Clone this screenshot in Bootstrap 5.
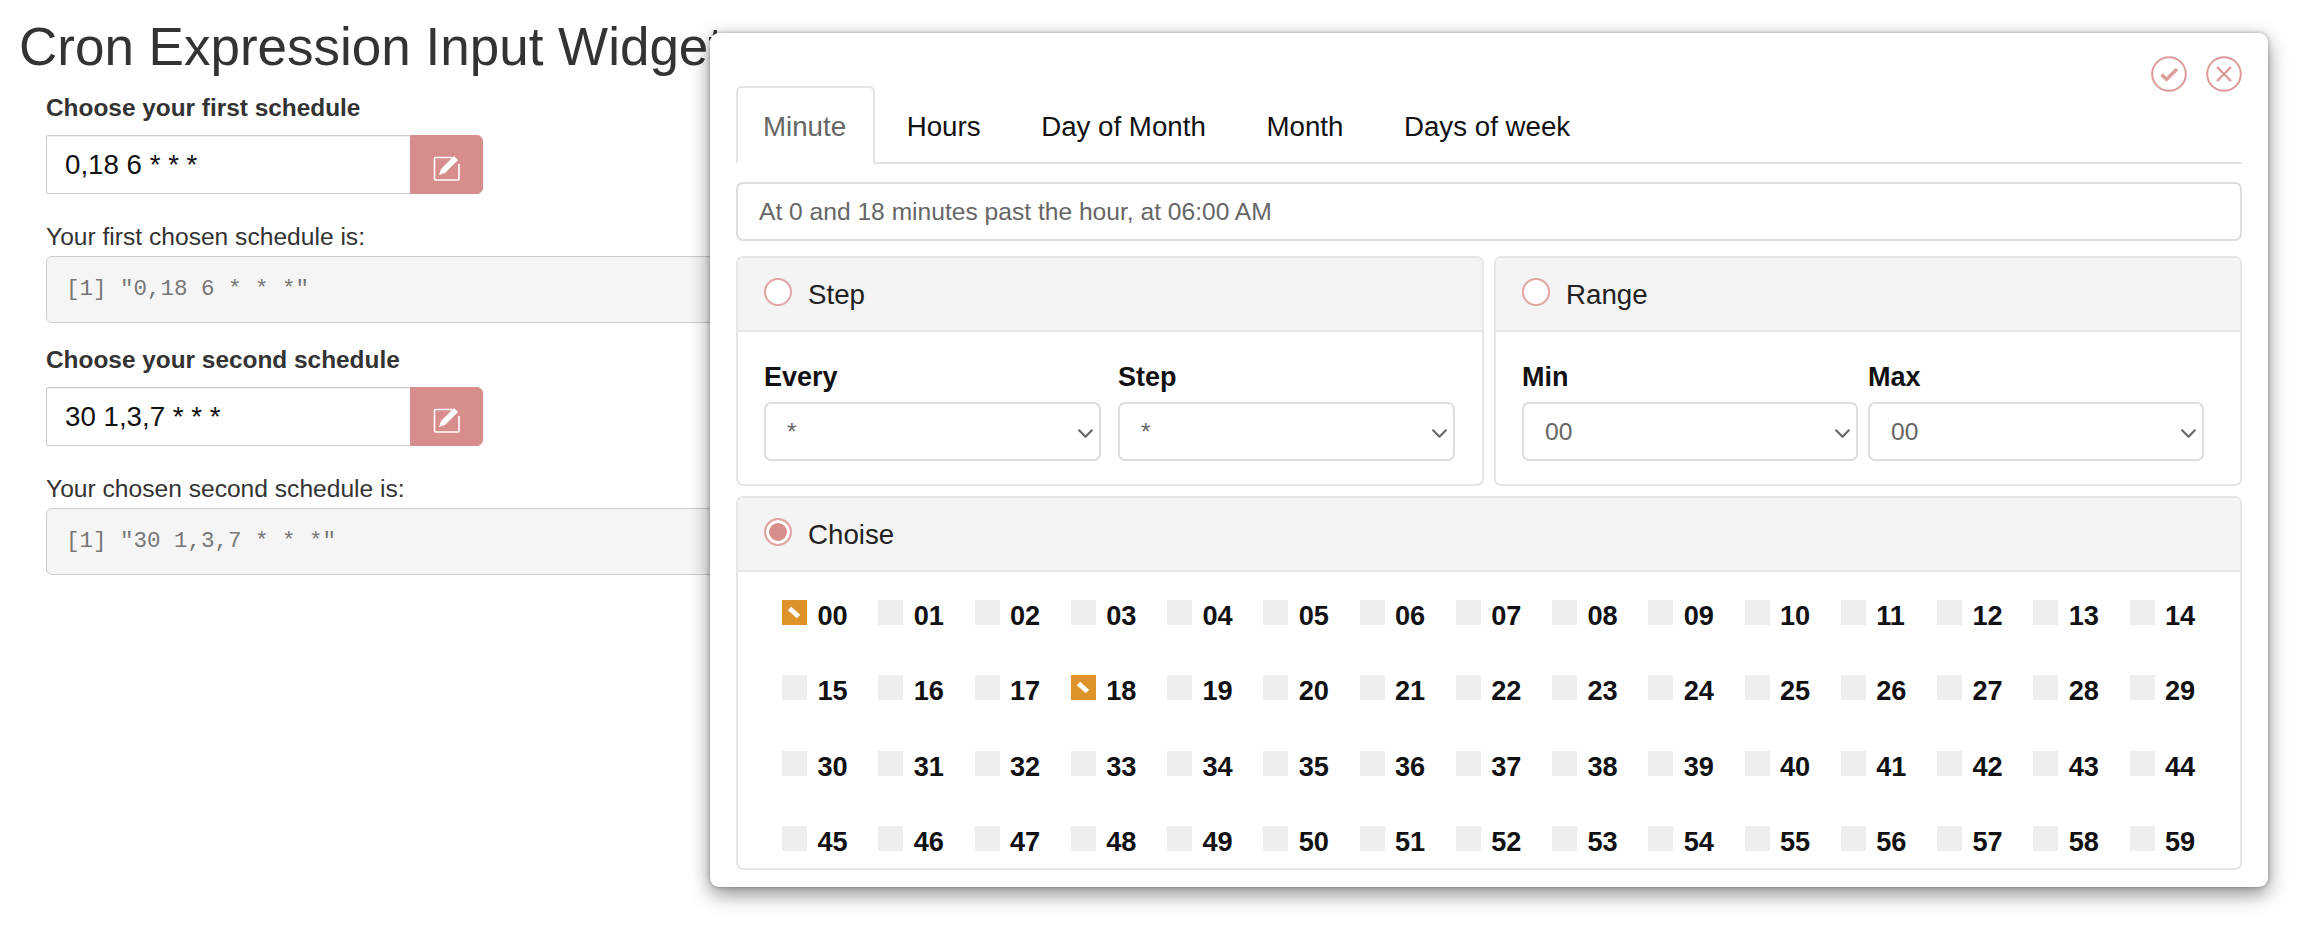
<!DOCTYPE html>
<html lang="en">
<head>
<meta charset="utf-8">
<title>Cron Expression Input Widget</title>
<link rel="stylesheet" href="https://cdn.jsdelivr.net/npm/bootstrap@5.3.0/dist/css/bootstrap.min.css">
<style>
html,body{height:925px;overflow:hidden}
body{font-family:"Liberation Sans",Arial,sans-serif;color:#333;background:#fff;position:relative}
.page-title{font-family:"Liberation Sans",Arial,sans-serif;font-size:53px;font-weight:400;line-height:58px;margin:0;padding:18px 0 0 19px;white-space:nowrap}
.left-col{padding:16px 0 0 46px;width:1100px}
.field-label{font-size:24.4px;font-weight:700;line-height:32px;margin:0 0 11px;display:block}
.cron-group{width:437px;height:59px;flex-wrap:nowrap}
.cron-group .form-control{height:59px;font-size:27.7px;color:#111;padding:0 18px;border-color:#ccc;border-radius:2px 0 0 2px;box-shadow:inset 0 1px 1px rgba(0,0,0,.07)}
.cron-btn{width:73px;height:59px;padding:0;background:#d68d8b;border:1px solid #d68d8b;border-radius:0 6px 6px 0!important;display:flex;align-items:center;justify-content:center}
.cron-btn:hover{background:#d68d8b;border-color:#d68d8b}
.cron-btn svg{margin-top:3px}
.out-label{font-size:24.6px;line-height:32px;margin:27px 0 3px}
.out-pre{font-family:"Liberation Mono","Courier New",monospace;font-size:22.5px;line-height:30px;color:#777;background:#f5f5f5;border:1px solid #ccc;border-radius:6px;height:67px;margin:0 0 21px;padding:17px 19px;overflow:hidden}
.cron-modal{position:absolute;left:710px;top:33px;width:1558px;height:854px;background:#fff;border-radius:9px;box-shadow:0 7px 20px rgba(0,0,0,.45),0 0 4px rgba(0,0,0,.3);padding:53px 26px 17px 26px;overflow:hidden}
.modal-actions{position:absolute;top:23px;right:26.5px;display:flex;gap:19px}
.modal-actions svg{display:block}
.cron-tabs{border-bottom:2px solid #e4e4e4;height:78px;gap:0}
.cron-tabs .nav-item{margin-right:3.6px}
.cron-tabs .nav-link{height:78px;margin-bottom:-2px;padding:0 26.5px;font-size:27.7px;line-height:78px;color:#111;border:2px solid transparent;border-radius:6px 6px 0 0;background:transparent}
.cron-tabs .nav-link.active{color:#666;border-color:#e4e4e4 #e4e4e4 #fff;background:#fff;padding-left:25px}
.info-box{height:59px;margin-top:18px;padding:0 21px;border:2px solid #ddd;border-radius:7px;font-size:24.6px;line-height:55px;color:#666}
.split{display:flex;gap:10px;margin-top:15px}
.split>.cron-card{flex:1 1 0;height:230px}
.cron-card{border:2px solid #e6e6e6;border-radius:7px;background:#fff;--bs-card-inner-border-radius:5px}
.cron-card .card-header{flex:none;height:74px;background:#f4f4f4;border-bottom:2px solid #e6e6e6;padding:2px 25px 0 26px;display:flex;align-items:center;gap:16px;font-size:27.7px;color:#222}
.radio-dot{width:28px;height:28px;flex:none;border:2px solid #e2a5a5;border-radius:50%;background:#fff;margin-top:-7px;display:block}
.radio-dot.on{background:#d68d8b;box-shadow:inset 0 0 0 3px #fff}
.sel-row{display:flex;padding:29px 25px 0 26px}
.gap-a{gap:17px}
.gap-b{gap:10px}
.sel-col{flex:0 0 auto}
.sel-name{font-size:27px;font-weight:700;line-height:32px;color:#111;margin:0 0 9px;display:block}
.sel-box{height:59px;font-size:24.6px;color:#666;padding:2px 40px 0 21px;border:2px solid #ddd;border-radius:7px;background-image:url("data:image/svg+xml,%3csvg xmlns='http://www.w3.org/2000/svg' viewBox='0 0 16 16'%3e%3cpath fill='none' stroke='%23666' stroke-linecap='round' stroke-linejoin='round' stroke-width='2' d='m2 5 6 6 6-6'/%3e%3c/svg%3e");background-size:17px 17px;background-position:right 5px top 21px}
.wide-a{width:337px}
.wide-b{width:336px}
.choice-card{height:374px;margin-top:10px;overflow:hidden}
.minute-grid{display:grid;grid-template-columns:repeat(15,96.25px);grid-auto-rows:75.5px;padding:27.5px 0 0 44px}
.minute-cell{display:flex;align-items:flex-start;gap:10.5px;font-size:27.2px;font-weight:700;line-height:32px;color:#111}
.tick{width:25px;height:25px;flex:none;background:#eee;position:relative;display:block}
.tick.on{background:#dd922b}
.tick.on::after{content:"";position:absolute;left:6px;top:10px;width:12px;height:5px;background:#fff;transform:rotate(42deg)}
</style>
</head>
<body>
<h1 class="page-title">Cron Expression Input Widget</h1>
<div class="left-col">
  <label class="field-label">Choose your first schedule</label>
  <div class="input-group cron-group">
    <input class="form-control" type="text" value="0,18 6 * * *">
    <button class="btn cron-btn" type="button" aria-label="Edit"><svg width="30" height="32" viewBox="0 0 30 32" fill="none"><path d="M20 7.500H3.500a1 1 0 0 0-1 1V29a1 1 0 0 0 1 1H26a1 1 0 0 0 1-1V14" stroke="#fff" stroke-width="1.600"/><path d="M7 25l2-6L22 6l4 4L13 23z" fill="#fff"/></svg></button>
  </div>
  <p class="out-label">Your first chosen schedule is:</p>
  <pre class="out-pre">[1] "0,18 6 * * *"</pre>
  <label class="field-label">Choose your second schedule</label>
  <div class="input-group cron-group">
    <input class="form-control" type="text" value="30 1,3,7 * * *">
    <button class="btn cron-btn" type="button" aria-label="Edit"><svg width="30" height="32" viewBox="0 0 30 32" fill="none"><path d="M20 7.500H3.500a1 1 0 0 0-1 1V29a1 1 0 0 0 1 1H26a1 1 0 0 0 1-1V14" stroke="#fff" stroke-width="1.600"/><path d="M7 25l2-6L22 6l4 4L13 23z" fill="#fff"/></svg></button>
  </div>
  <p class="out-label">Your chosen second schedule is:</p>
  <pre class="out-pre">[1] "30 1,3,7 * * *"</pre>
</div>

<div class="cron-modal">
  <div class="modal-actions">
    <svg width="36" height="36" viewBox="0 0 36 36" fill="none" stroke="#dc9a99"><circle cx="18" cy="18" r="16.800" stroke-width="2"/><path d="M10.500 18.500 15.500 23.500 26 13" stroke-width="3.200"/></svg>
    <svg width="36" height="36" viewBox="0 0 36 36" fill="none" stroke="#dc9a99"><circle cx="18" cy="18" r="16.800" stroke-width="2"/><path d="M11 11 25 25M25 11 11 25" stroke-width="2.400"/></svg>
  </div>
  <ul class="nav nav-tabs cron-tabs">
    <li class="nav-item"><a class="nav-link active" href="#">Minute</a></li>
    <li class="nav-item"><a class="nav-link" href="#">Hours</a></li>
    <li class="nav-item"><a class="nav-link" href="#">Day of Month</a></li>
    <li class="nav-item"><a class="nav-link" href="#">Month</a></li>
    <li class="nav-item"><a class="nav-link" href="#">Days of week</a></li>
  </ul>
  <div class="info-box">At 0 and 18 minutes past the hour, at 06:00 AM</div>
  <div class="split">
    <div class="card cron-card">
      <div class="card-header"><span class="radio-dot"></span>Step</div>
      <div class="sel-row gap-a">
        <div class="sel-col"><span class="sel-name">Every</span><select class="form-select sel-box wide-a"><option>*</option></select></div>
        <div class="sel-col"><span class="sel-name">Step</span><select class="form-select sel-box wide-a"><option>*</option></select></div>
      </div>
    </div>
    <div class="card cron-card">
      <div class="card-header"><span class="radio-dot"></span>Range</div>
      <div class="sel-row gap-b">
        <div class="sel-col"><span class="sel-name">Min</span><select class="form-select sel-box wide-b"><option>00</option></select></div>
        <div class="sel-col"><span class="sel-name">Max</span><select class="form-select sel-box wide-b"><option>00</option></select></div>
      </div>
    </div>
  </div>
  <div class="card cron-card choice-card">
    <div class="card-header"><span class="radio-dot on"></span>Choise</div>
    <div class="minute-grid">
      <div class="minute-cell"><span class="tick on"></span>00</div><div class="minute-cell"><span class="tick"></span>01</div><div class="minute-cell"><span class="tick"></span>02</div><div class="minute-cell"><span class="tick"></span>03</div><div class="minute-cell"><span class="tick"></span>04</div><div class="minute-cell"><span class="tick"></span>05</div><div class="minute-cell"><span class="tick"></span>06</div><div class="minute-cell"><span class="tick"></span>07</div><div class="minute-cell"><span class="tick"></span>08</div><div class="minute-cell"><span class="tick"></span>09</div><div class="minute-cell"><span class="tick"></span>10</div><div class="minute-cell"><span class="tick"></span>11</div><div class="minute-cell"><span class="tick"></span>12</div><div class="minute-cell"><span class="tick"></span>13</div><div class="minute-cell"><span class="tick"></span>14</div>
      <div class="minute-cell"><span class="tick"></span>15</div><div class="minute-cell"><span class="tick"></span>16</div><div class="minute-cell"><span class="tick"></span>17</div><div class="minute-cell"><span class="tick on"></span>18</div><div class="minute-cell"><span class="tick"></span>19</div><div class="minute-cell"><span class="tick"></span>20</div><div class="minute-cell"><span class="tick"></span>21</div><div class="minute-cell"><span class="tick"></span>22</div><div class="minute-cell"><span class="tick"></span>23</div><div class="minute-cell"><span class="tick"></span>24</div><div class="minute-cell"><span class="tick"></span>25</div><div class="minute-cell"><span class="tick"></span>26</div><div class="minute-cell"><span class="tick"></span>27</div><div class="minute-cell"><span class="tick"></span>28</div><div class="minute-cell"><span class="tick"></span>29</div>
      <div class="minute-cell"><span class="tick"></span>30</div><div class="minute-cell"><span class="tick"></span>31</div><div class="minute-cell"><span class="tick"></span>32</div><div class="minute-cell"><span class="tick"></span>33</div><div class="minute-cell"><span class="tick"></span>34</div><div class="minute-cell"><span class="tick"></span>35</div><div class="minute-cell"><span class="tick"></span>36</div><div class="minute-cell"><span class="tick"></span>37</div><div class="minute-cell"><span class="tick"></span>38</div><div class="minute-cell"><span class="tick"></span>39</div><div class="minute-cell"><span class="tick"></span>40</div><div class="minute-cell"><span class="tick"></span>41</div><div class="minute-cell"><span class="tick"></span>42</div><div class="minute-cell"><span class="tick"></span>43</div><div class="minute-cell"><span class="tick"></span>44</div>
      <div class="minute-cell"><span class="tick"></span>45</div><div class="minute-cell"><span class="tick"></span>46</div><div class="minute-cell"><span class="tick"></span>47</div><div class="minute-cell"><span class="tick"></span>48</div><div class="minute-cell"><span class="tick"></span>49</div><div class="minute-cell"><span class="tick"></span>50</div><div class="minute-cell"><span class="tick"></span>51</div><div class="minute-cell"><span class="tick"></span>52</div><div class="minute-cell"><span class="tick"></span>53</div><div class="minute-cell"><span class="tick"></span>54</div><div class="minute-cell"><span class="tick"></span>55</div><div class="minute-cell"><span class="tick"></span>56</div><div class="minute-cell"><span class="tick"></span>57</div><div class="minute-cell"><span class="tick"></span>58</div><div class="minute-cell"><span class="tick"></span>59</div>
    </div>
  </div>
</div>
<script src="https://cdn.jsdelivr.net/npm/bootstrap@5.3.0/dist/js/bootstrap.bundle.min.js"></script>
</body>
</html>
